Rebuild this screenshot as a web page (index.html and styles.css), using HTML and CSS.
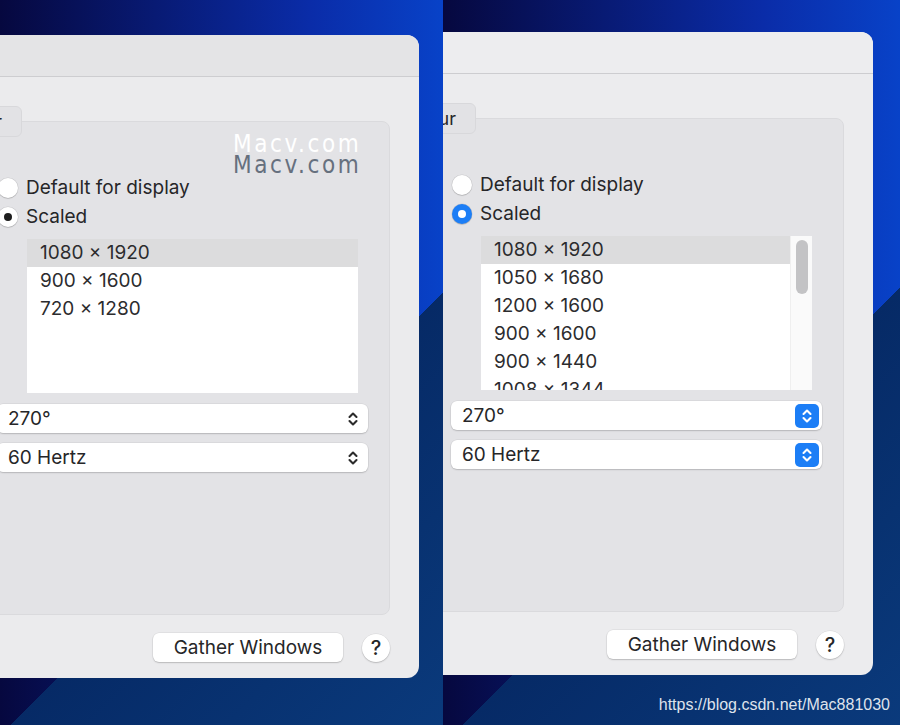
FILE: index.html
```html
<!DOCTYPE html>
<html lang="en">
<head>
  <meta charset="UTF-8">
  <title>Displays</title>
  <link rel="stylesheet" href="styles.css">
</head>
<body>

<div class="desk">

  <!-- left screenshot: inactive window -->
  <div class="shot">
    <div class="panel panel-left">
      <div class="titlebar"></div>
      <div class="content">
        <div class="tab">Colour</div>
        <div class="group">
          <div class="radio"><span class="knob"></span>Default for display</div>
          <div class="radio"><span class="knob on"></span>Scaled</div>
          <div class="res-list">
            <div class="row selected">1080 × 1920</div>
            <div class="row">900 × 1600</div>
            <div class="row">720 × 1280</div>
          </div>
          <div class="popup">
            <span>270°</span>
            <span class="stepper">
              <svg viewBox="0 0 24 24" width="24" height="24"><path d="M8.5 10L12 6.5L15.5 10M8.5 14L12 17.5L15.5 14"/></svg>
            </span>
          </div>
          <div class="popup">
            <span>60 Hertz</span>
            <span class="stepper">
              <svg viewBox="0 0 24 24" width="24" height="24"><path d="M8.5 10L12 6.5L15.5 10M8.5 14L12 17.5L15.5 14"/></svg>
            </span>
          </div>
        </div>
        <div class="footer">
          <button class="btn">Gather Windows</button>
          <button class="help">?</button>
        </div>
      </div>
    </div>
    <div class="watermark">
      <div class="wm-top">Macv.com</div>
      <div class="wm-bottom">Macv.com</div>
    </div>
  </div>

  <!-- right screenshot: active window -->
  <div class="shot">
    <div class="panel panel-right active">
      <div class="titlebar"></div>
      <div class="content">
        <div class="tab">Colour</div>
        <div class="group">
          <div class="radio"><span class="knob"></span>Default for display</div>
          <div class="radio"><span class="knob on"></span>Scaled</div>
          <div class="res-list scrolling">
            <div class="rows">
              <div class="row selected">1080 × 1920</div>
              <div class="row">1050 × 1680</div>
              <div class="row">1200 × 1600</div>
              <div class="row">900 × 1600</div>
              <div class="row">900 × 1440</div>
              <div class="row">1008 × 1344</div>
            </div>
            <div class="scrollbar"><div class="thumb"></div></div>
          </div>
          <div class="popup">
            <span>270°</span>
            <span class="stepper">
              <svg viewBox="0 0 24 24" width="24" height="24"><path d="M8.5 10L12 6.5L15.5 10M8.5 14L12 17.5L15.5 14"/></svg>
            </span>
          </div>
          <div class="popup">
            <span>60 Hertz</span>
            <span class="stepper">
              <svg viewBox="0 0 24 24" width="24" height="24"><path d="M8.5 10L12 6.5L15.5 10M8.5 14L12 17.5L15.5 14"/></svg>
            </span>
          </div>
        </div>
        <div class="footer">
          <button class="btn">Gather Windows</button>
          <button class="help">?</button>
        </div>
      </div>
    </div>
    <div class="credit">https://blog.csdn.net/Mac881030</div>
  </div>

</div>

</body>
</html>
```

FILE: styles.css
```css
:root {
  --text: #262628;
  --blue: #1c7ef6;
  --radius: 6px;
}
body {
  margin: 0;
  padding: 0;
  font-family: Inter, "Liberation Sans", sans-serif;
  color: var(--text);
}
.desk {
  display: flex;
  width: 900px;
  height: 725px;
  overflow: hidden;
}
.shot {
  position: relative;
  height: 725px;
  overflow: hidden;
  background:
    linear-gradient(135deg, transparent 63%, #062a66 63%, #0a3a7c 100%),
    linear-gradient(90deg, #06083f 0%, #0a2ca8 70%, #0842c8 100%);
}
.shot:first-child {
  width: 443px;
}
.shot:last-child {
  width: 457px;
}

/* window */
.panel {
  width: 539px;
  height: 643px;
  border-radius: 12px;
  overflow: hidden;
  background: #ebebed;
}
.panel-left {
  margin: 35px 0 0 -120px;
}
.panel-right {
  margin: 32px 0 0 -109px;
  background: #ececee;
}
.titlebar {
  height: 41px;
  background: #e4e4e6;
  border-bottom: 1px solid #cdcdd0;
}
.active .titlebar {
  background: #ededef;
}
.content {
  padding: 0 29px 0 20px;
}
.tab {
  position: relative;
  z-index: 1;
  box-sizing: border-box;
  width: 120px;
  height: 31px;
  margin: 29px 0 0 2px;
  padding-right: 19px;
  display: flex;
  align-items: center;
  justify-content: flex-end;
  font-size: 18px;
  background: #e2e2e5;
  border: 1px solid #d8d8db;
  border-radius: var(--radius);
}
.group {
  box-sizing: border-box;
  height: 494px;
  margin-top: -16px;
  padding: 51px 0 0 96px;
  background: #e3e3e6;
  border: 1px solid #dadadd;
  border-radius: 8px;
}

/* radios */
.radio {
  display: flex;
  align-items: center;
  gap: 8px;
  height: 29px;
  margin-left: 1px;
  font-size: 19px;
}
.knob {
  position: relative;
  width: 20px;
  height: 20px;
  border-radius: 50%;
  background: #fff;
  box-shadow: 0 0 0 0.5px rgba(0,0,0,0.12), 0 1px 1px rgba(0,0,0,0.12);
}
.knob.on::after {
  content: "";
  position: absolute;
  left: 6px;
  top: 6px;
  width: 8px;
  height: 8px;
  border-radius: 50%;
  background: #1e1e1e;
}
.active .knob.on {
  background: var(--blue);
}
.active .knob.on::after {
  background: #fff;
}

/* resolution list */
.res-list {
  display: flex;
  width: 331px;
  height: 154px;
  margin: 8px 0 0 30px;
  background: #fff;
  overflow: hidden;
}
.res-list .rows {
  flex: 1;
}
.res-list > .row {
  flex: none;
}
.res-list:not(.scrolling) {
  flex-direction: column;
}
.row {
  height: 28px;
  line-height: 28px;
  padding-left: 13px;
  font-size: 19px;
  color: #2c2c2e;
}
.row.selected {
  background: #dcdcdd;
}
.scrollbar {
  width: 21px;
  border-left: 1px solid #efefef;
  background: #fafafa;
}
.thumb {
  width: 12px;
  height: 54px;
  margin: 4px 0 0 5px;
  border-radius: 6px;
  background: #c3c3c5;
}

/* pop-up buttons */
.popup {
  box-sizing: border-box;
  display: flex;
  align-items: center;
  justify-content: space-between;
  width: 371px;
  height: 29px;
  margin-top: 10px;
  padding: 0 3px 0 11px;
  font-size: 19px;
  background: #fff;
  border-radius: var(--radius);
  box-shadow: 0 0 0 0.5px rgba(0,0,0,0.08), 0 1px 1.5px rgba(0,0,0,0.16);
}
.res-list + .popup {
  margin-top: 11px;
}
.stepper {
  display: flex;
  width: 24px;
  height: 24px;
  border-radius: 5px;
}
.stepper path {
  fill: none;
  stroke: #2b2b2b;
  stroke-width: 2.1;
  stroke-linecap: round;
  stroke-linejoin: round;
}
.active .stepper {
  background: var(--blue);
}
.active .stepper path {
  stroke: #fff;
}

/* footer buttons */
.footer {
  display: flex;
  justify-content: flex-end;
  align-items: center;
  gap: 19px;
  height: 29px;
  margin-top: 18px;
}
.btn, .help {
  font-family: inherit;
  color: var(--text);
  background: #fff;
  border: none;
  box-shadow: 0 0 0 0.5px rgba(0,0,0,0.08), 0 1px 1.5px rgba(0,0,0,0.18);
  cursor: pointer;
}
.btn {
  width: 190px;
  height: 29px;
  font-size: 19px;
  border-radius: var(--radius);
}
.help {
  width: 28px;
  height: 28px;
  padding: 0;
  border-radius: 50%;
  font-size: 20px;
  font-weight: 500;
}

/* overlay text */
.watermark {
  position: absolute;
  left: 233px;
  top: 134px;
  font-family: "DejaVu Sans Condensed", "DejaVu Sans", sans-serif;
  font-size: 24px;
  letter-spacing: 2.6px;
  line-height: 21px;
}
.wm-top {
  color: #fff;
}
.wm-bottom {
  color: #66707e;
}
.credit {
  margin-top: 21px;
  padding-right: 10px;
  text-align: right;
  font-family: "Liberation Sans", sans-serif;
  font-size: 16px;
  color: #dfe3ec;
}
```
